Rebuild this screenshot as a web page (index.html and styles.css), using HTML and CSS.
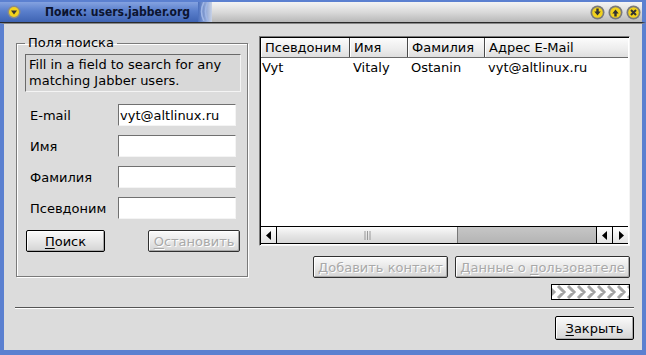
FILE: index.html
```html
<!DOCTYPE html>
<html>
<head>
    <title>Поиск: users.jabber.org</title>
    <link rel="stylesheet" href="styles.css">
</head>
<body>

<div class="window">
    <div class="titlebar">
        <div class="title-blue">
            <span class="tb-icon">
                <svg width="14" height="14" viewBox="0 0 14 14"><circle cx="7" cy="7" r="6.5" fill="#8a8a8a"/><circle cx="7" cy="7" r="5" fill="#f2d21c"/><path d="M4 5.5h6L7 9.5z" fill="#333"/></svg>
            </span>
            <span class="title-text">Поиск: users.jabber.org</span>
        </div>
        <div class="title-deco">
            <svg width="14" height="19" viewBox="0 0 14 19"><path d="M6 0Q1 9.5 6 19M10 0Q5 9.5 10 19" fill="none" stroke="#9fb6e6" stroke-width="1.6"/></svg>
        </div>
        <div class="title-grey">
            <span class="tb-btn">
                <svg width="15" height="15" viewBox="0 0 15 15"><circle cx="7.5" cy="7.5" r="7" fill="#7a7a7a"/><circle cx="7.5" cy="7.5" r="5.3" fill="#f2d21c"/><path d="M6.3 3.5h2.4v3h2l-3.2 4-3.2-4h2z" fill="#333"/></svg>
            </span>
            <span class="tb-btn">
                <svg width="15" height="15" viewBox="0 0 15 15"><circle cx="7.5" cy="7.5" r="7" fill="#7a7a7a"/><circle cx="7.5" cy="7.5" r="5.3" fill="#f2d21c"/><path d="M6.3 11.5h2.4v-3h2l-3.2-4-3.2 4h2z" fill="#333"/></svg>
            </span>
            <span class="tb-btn">
                <svg width="15" height="15" viewBox="0 0 15 15"><circle cx="7.5" cy="7.5" r="7" fill="#7a7a7a"/><circle cx="7.5" cy="7.5" r="5.3" fill="#f2d21c"/><path d="M5 5l5 5M10 5l-5 5" stroke="#333" stroke-width="2"/></svg>
            </span>
        </div>
    </div>

    <div class="client">
        <div class="main">
            <fieldset class="search-group">
                <legend>Поля поиска</legend>
                <div class="info">Fill in a field to search for any matching Jabber users.</div>
                <div class="form-row"><label>E-mail</label><input class="field" type="text" value="vyt@altlinux.ru"></div>
                <div class="form-row"><label>Имя</label><input class="field" type="text"></div>
                <div class="form-row"><label>Фамилия</label><input class="field" type="text"></div>
                <div class="form-row"><label>Псевдоним</label><input class="field" type="text"></div>
                <div class="search-buttons">
                    <button class="btn btn-search"><u>П</u>оиск</button>
                    <button class="btn btn-stop" disabled><u>О</u>становить</button>
                </div>
            </fieldset>

            <div class="results">
                <div class="table">
                    <div class="table-head">
                        <div class="col c1">Псевдоним</div>
                        <div class="col c2">Имя</div>
                        <div class="col c3">Фамилия</div>
                        <div class="col c4">Адрес E-Mail</div>
                    </div>
                    <div class="table-body">
                        <div class="table-row">
                            <div class="cell c1">Vyt</div>
                            <div class="cell c2">Vitaly</div>
                            <div class="cell c3">Ostanin</div>
                            <div class="cell c4">vyt@altlinux.ru</div>
                        </div>
                    </div>
                    <div class="hscroll">
                        <div class="sb-arrow">
                            <svg width="6" height="9" viewBox="0 0 6 9"><path d="M5 0v9L0 4.5z" fill="#000"/></svg>
                        </div>
                        <div class="sb-thumb">
                            <svg width="7" height="9" viewBox="0 0 7 9"><path d="M1 0v9M3.5 0v9M6 0v9" stroke="#999" stroke-width="1"/></svg>
                        </div>
                        <div class="sb-track"></div>
                        <div class="sb-arrow sb-right">
                            <svg width="6" height="9" viewBox="0 0 6 9"><path d="M5 0v9L0 4.5z" fill="#000"/></svg>
                        </div>
                        <div class="sb-arrow sb-last">
                            <svg width="6" height="9" viewBox="0 0 6 9"><path d="M1 0v9L6 4.5z" fill="#000"/></svg>
                        </div>
                    </div>
                </div>
                <div class="result-buttons">
                    <button class="btn btn-add" disabled><u>Д</u>обавить контакт</button>
                    <button class="btn btn-info" disabled>Данные о <u>п</u>ользователе</button>
                </div>
                <div class="busy">
                    <svg width="77" height="14" viewBox="0 0 77 14">
                        <path d="M-4 1l6 6-6 6M6 1l6 6-6 6M16 1l6 6-6 6M26 1l6 6-6 6M36 1l6 6-6 6M46 1l6 6-6 6M56 1l6 6-6 6M66 1l6 6-6 6M76 1l6 6-6 6" fill="none" stroke="#a4a4a4" stroke-width="3"/>
                    </svg>
                </div>
            </div>
        </div>

        <div class="separator"></div>

        <div class="footer">
            <button class="btn btn-close"><u>З</u>акрыть</button>
        </div>
    </div>
</div>

</body>
</html>
```

FILE: styles.css
```css
body {
    margin: 0;
    font-family: "DejaVu Sans", sans-serif;
    font-size: 13px;
    color: #000;
    background: #000;
}
.window {
    width: 646px;
    height: 355px;
    display: flex;
    flex-direction: column;
    background: #5b80d0;
}
.titlebar {
    height: 20px;
    display: flex;
    border-top: 2px solid #5b80d0;
    border-right: 4px solid #5b80d0;
    border-bottom: 1px solid #2a2a2a;
}
.title-blue {
    display: flex;
    align-items: center;
    padding-right: 8px;
    background: linear-gradient(#84a2e0, #5a7fcc 45%, #3f64b3);
}
.tb-icon {
    display: flex;
    margin-left: 7px;
}
.title-text {
    margin-left: 24px;
    font-family: "DejaVu Sans Condensed", "DejaVu Sans", sans-serif;
    font-weight: bold;
    font-size: 12px;
    white-space: nowrap;
    color: #0c1430;
}
.title-deco {
    width: 14px;
    display: flex;
    background: linear-gradient(90deg, #4a6fbe, #c8d2e6);
}
.title-grey {
    flex: 1;
    display: flex;
    align-items: center;
    justify-content: flex-end;
    gap: 3px;
    padding-right: 1px;
    background: linear-gradient(#f4f4f4, #dadada 50%, #b8b8b8);
}
.tb-btn {
    display: flex;
}
.client {
    flex: 1;
    display: flex;
    flex-direction: column;
    background: #dcdcdc;
    border-left: 4px solid #5b80d0;
    border-right: 4px solid #5b80d0;
    border-top: 1px solid #888;
    border-bottom: 5px solid #5b80d0;
    box-shadow: 0 1px 0 #000;
}
.main {
    display: flex;
    gap: 11px;
    padding: 12px 12px 0 12px;
}
.search-group {
    width: 232px;
    box-sizing: border-box;
    height: 241px;
    margin: 0;
    padding: 0 6px 0 8px;
    border: 1px solid #7a7a7a;
    box-shadow: 1px 1px 0 #fff, inset 1px 1px 0 #fff;
}
.search-group legend {
    padding: 0 3px;
    line-height: 14px;
}
.info {
    margin-top: 4px;
    height: 38px;
    box-sizing: border-box;
    width: 216px;
    padding: 2px 3px;
    line-height: 16px;
    border: 1px solid;
    border-color: #6a6a6a #f4f4f4 #f4f4f4 #6a6a6a;
    background: #d8d8d8;
}
.form-row {
    display: flex;
    align-items: center;
    height: 22px;
    margin-top: 9px;
}
.info + .form-row {
    margin-top: 12px;
}
.form-row label {
    width: 88px;
    padding-left: 5px;
}
.field {
    width: 118px;
    height: 22px;
    box-sizing: border-box;
    margin: 0;
    padding: 0 1px;
    font-family: "DejaVu Sans", sans-serif;
    font-size: 13px;
    background: #fff;
    border: 1px solid;
    border-color: #707070 #f4f4f4 #f4f4f4 #707070;
    outline: none;
}
.search-buttons {
    display: flex;
    margin-top: 11px;
    padding-left: 1px;
}
.btn {
    height: 22px;
    box-sizing: border-box;
    padding: 0;
    font-family: "DejaVu Sans", sans-serif;
    font-size: 13px;
    color: #000;
    border: 1px solid #000;
    border-radius: 2px;
    background: linear-gradient(#fafafa, #e8e8e8 50%, #d4d4d4);
    box-shadow: inset 1px 1px 0 #fff, inset -1px -1px 0 #a8a8a8;
}
.btn:disabled {
    color: #a9a9a9;
    text-shadow: 1px 1px 0 #fff;
    border-color: #303030;
}
.btn u {
    text-underline-offset: 2px;
}
.btn-search {
    width: 79px;
}
.btn-stop {
    width: 92px;
    margin-left: 43px;
}
.results {
    width: 371px;
    display: flex;
    flex-direction: column;
    align-items: flex-end;
}
.table {
    width: 371px;
    height: 210px;
    box-sizing: border-box;
    display: flex;
    flex-direction: column;
    background: #fff;
    border: 1px solid;
    border-color: #7a7a7a #f4f4f4 #f4f4f4 #7a7a7a;
    box-shadow: inset 1px 1px 0 #000;
    padding: 1px 1px 0 1px;
}
.table-head {
    display: flex;
    height: 20px;
    box-sizing: border-box;
    border-bottom: 1px solid #6a6a6a;
    background: linear-gradient(#fcfcfc, #ececec 60%, #dedede);
}
.col {
    padding-left: 4px;
    line-height: 19px;
    box-sizing: border-box;
    border-right: 1px solid #4a4a4a;
    box-shadow: inset 1px 0 0 #fff;
}
.c1 { width: 89px; }
.c2 { width: 58px; }
.c3 { width: 77px; }
.c4 { flex: 1; }
.col.c4 {
    border-right: none;
}
.table-body {
    flex: 1;
}
.table-row {
    display: flex;
    height: 20px;
    line-height: 20px;
}
.cell {
    padding-left: 1px;
    box-sizing: border-box;
}
.cell.c2,
.cell.c3,
.cell.c4 {
    padding-left: 3px;
}
.hscroll {
    height: 16px;
    display: flex;
    border-top: 1px solid #000;
    border-bottom: 1px solid #000;
    margin-bottom: 1px;
}
.sb-arrow {
    width: 15px;
    display: flex;
    align-items: center;
    justify-content: center;
    background: linear-gradient(#fff, #e2e2e2);
    border-right: 1px solid #000;
}
.sb-right {
    border-left: 1px solid #000;
}
.sb-last {
    border-right: none;
}
.sb-thumb {
    width: 180px;
    display: flex;
    align-items: center;
    justify-content: center;
    background: linear-gradient(#fbfbfb, #e6e6e6 50%, #d6d6d6);
    border-right: 1px solid #777;
}
.sb-track {
    flex: 1;
    background: linear-gradient(#c6c6c6, #b4b4b4);
}
.result-buttons {
    display: flex;
    gap: 7px;
    margin-top: 10px;
}
.btn-add {
    width: 135px;
}
.btn-info {
    width: 175px;
}
.busy {
    width: 79px;
    height: 16px;
    box-sizing: border-box;
    margin-top: 6px;
    border: 1px solid #000;
    background: #fff;
    display: flex;
}
.separator {
    margin: 7px 8px 0 11px;
    height: 1px;
    background: #555;
    box-shadow: 0 1px 0 #fff;
}
.footer {
    display: flex;
    justify-content: flex-end;
    padding: 8px 8px 0 0;
}
.btn-close {
    width: 79px;
    height: 24px;
}
```
